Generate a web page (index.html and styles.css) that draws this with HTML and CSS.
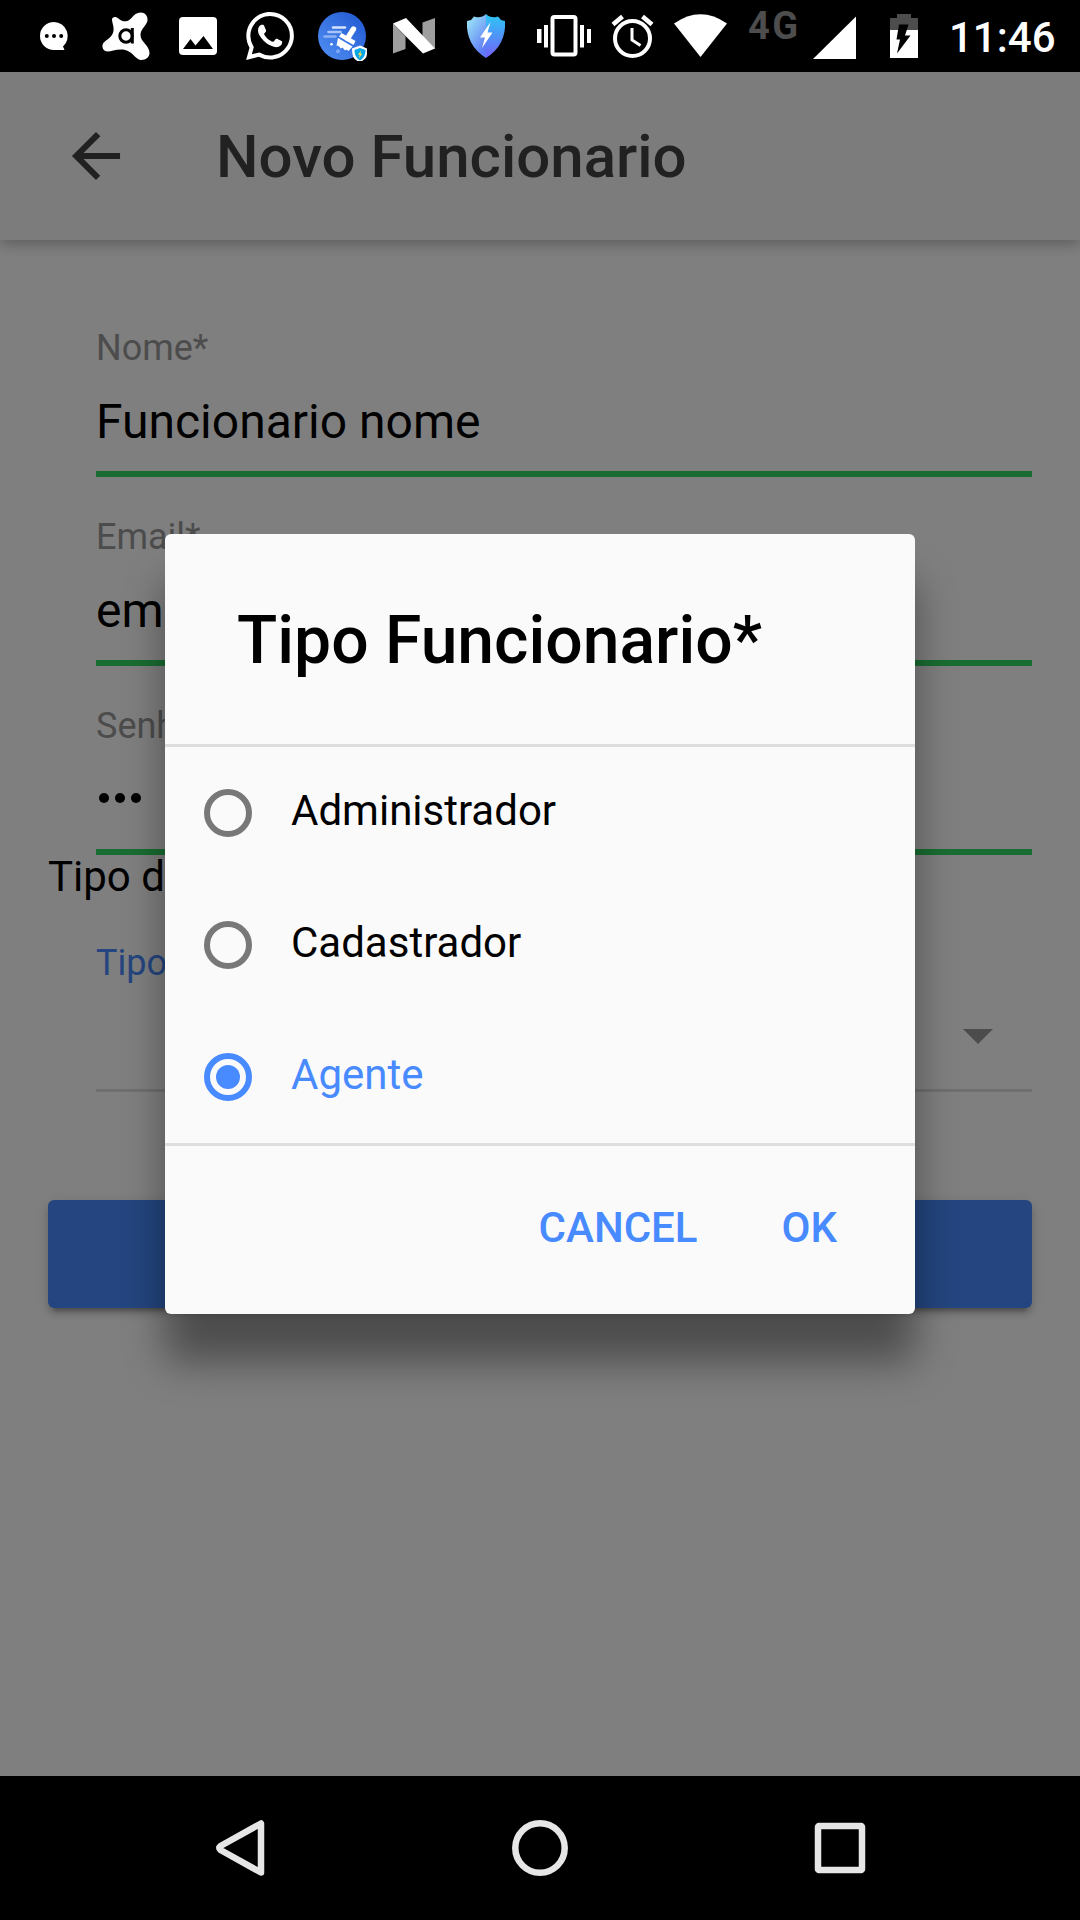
FILE: index.html
```html
<!DOCTYPE html>
<html lang="pt">
<head>
<meta charset="utf-8">
<title>Novo Funcionario</title>
<link rel="stylesheet" href="styles.css">
</head>
<body>
<header class="status">
  <div class="status-notifications">
    <svg class="notif" viewBox="18 0 72 72"><path fill="#fff" d="M54 22a14 14 0 1 0 0 28H64.500L63 46.500A14 14 0 0 0 54 22z"/><g><circle cx="46.800" cy="36" r="2"/><circle cx="54" cy="36" r="2"/><circle cx="61.200" cy="36" r="2"/></g></svg>
    <svg class="notif" viewBox="90 0 72 72"><path fill="#fff" d="M112 19.500C112 16.500 116 16 118.500 18.500C122 22 127 22.500 131 18.500C134 14.500 137 12.500 140.500 12.500C145 12.500 148 16 147.500 20.500C147 25 140.500 29 140.500 35C140.500 42 149.500 45.500 149.500 53C149.500 57 146 60 141.500 60C134.500 60 133 49.500 121 49.500C115 49.500 111 51.500 107.500 51.500C104 51.500 102 48.500 102.500 45C103.500 40 112 39.500 113.500 31C114.200 26 112 23 112 19.500z"/><circle cx="126" cy="36" r="6.200" fill="none" stroke="#000" stroke-width="3"/><path d="M132.300 28v15.500" stroke="#000" stroke-width="3"/></svg>
    <svg class="notif" viewBox="162 0 72 72"><rect x="179" y="17" width="38" height="38" rx="4" fill="#fff"/><path d="M183 49l7.500-10 5 6.500 8-9.500L213 49z"/></svg>
    <svg class="notif" viewBox="234 0 72 72"><g transform="translate(246 12) scale(2)" fill="#fff"><path d="M17.472 14.382c-.297-.149-1.758-.867-2.030-.967-.273-.099-.471-.148-.670.150-.197.297-.767.966-.940 1.164-.173.199-.347.223-.644.075-.297-.150-1.255-.463-2.390-1.475-.883-.788-1.480-1.761-1.653-2.059-.173-.297-.018-.458.130-.606.134-.133.298-.347.446-.520.149-.174.198-.298.298-.497.099-.198.050-.371-.025-.520-.075-.149-.669-1.612-.916-2.207-.242-.579-.487-.500-.669-.510-.173-.008-.371-.010-.570-.010-.198 0-.520.074-.792.372-.272.297-1.040 1.016-1.040 2.479 0 1.462 1.065 2.875 1.213 3.074.149.198 2.096 3.200 5.077 4.487.709.306 1.262.489 1.694.625.712.227 1.360.195 1.871.118.571-.085 1.758-.719 2.006-1.413.248-.694.248-1.289.173-1.413-.074-.124-.272-.198-.570-.347m-5.421 7.403h-.004a9.870 9.870 0 01-5.031-1.378l-.361-.214-3.741.982.998-3.648-.235-.374a9.860 9.860 0 01-1.510-5.260c.001-5.450 4.436-9.884 9.888-9.884 2.640 0 5.122 1.030 6.988 2.898a9.825 9.825 0 012.893 6.994c-.003 5.450-4.437 9.884-9.885 9.884m8.413-18.297A11.815 11.815 0 0012.050 0C5.495 0 .160 5.335.157 11.892c0 2.096.547 4.142 1.588 5.945L.057 24l6.305-1.654a11.882 11.882 0 005.683 1.448h.005c6.554 0 11.890-5.335 11.893-11.893a11.821 11.821 0 00-3.480-8.413z"/></g></svg>
    <svg class="notif" viewBox="306 0 72 72">
      <defs><linearGradient id="disc" x1="0" y1="1" x2="1" y2="0"><stop offset="0" stop-color="#5290f4"/><stop offset="1" stop-color="#1f57d0"/></linearGradient></defs>
      <circle cx="342" cy="36" r="24" fill="url(#disc)"/>
      <g stroke-width="2.600" stroke-linecap="round"><path d="M333 27.500h12" stroke="#d5e2fb"/><path d="M328.500 32h12" stroke="#a9c5f8"/><path d="M324.500 36.500h11" stroke="#8fb2f4"/></g>
      <path d="M353.500 29L347.500 38.500" stroke="#fff" stroke-width="5.400" stroke-linecap="round"/>
      <path fill="#fff" d="M341.500 33l14 8-2 4-14.500-8.500zM338 38l14.500 8.500-4 4.500-2-1.500-1.500 1-2.500-3-1.500 1-2.500-2.500-2-.5z"/>
      <circle cx="331.500" cy="44.200" r="1.300" fill="#fff"/><circle cx="338" cy="51.300" r="2" fill="#7daaf9"/>
      <path d="M360 45.500l7 3c0 6-1.500 10-5 12.500h-4.500c-3.500-2.500-5.500-6.500-5.500-12.500z" fill="#fff"/><circle cx="359.800" cy="53.800" r="7.200" fill="#fff"/>
      <path d="M360 48l5.500 2c0 4.500-1.500 8-5.500 10.500c-4-2.500-5.500-6-5.500-10.500z" fill="#08a7e5"/><path fill="#fd4" d="M361 50.500l-3 4.200h1.700l-.700 3.500 3.200-4.500h-1.700z"/>
    </svg>
    <svg class="notif" viewBox="378 0 72 72"><path fill="#9e9e9e" d="M393 23.500l12.500 13V49L393 53.500zM422.500 22.500L435 18v31l-12.500-12z"/><path fill="#fff" d="M393 23.500L406 18l29 30.500-12 5z"/></svg>
    <svg class="notif" viewBox="450 0 72 72">
      <defs><linearGradient id="sl" x1="0" y1="0" x2=".6" y2="1"><stop offset="0" stop-color="#a0f0f8"/><stop offset="1" stop-color="#607af5"/></linearGradient><linearGradient id="sr" x1="0" y1="0" x2="0" y2="1"><stop offset="0" stop-color="#2bc8f5"/><stop offset="1" stop-color="#7461fa"/></linearGradient></defs>
      <path fill="url(#sl)" d="M486 14q-3.500 3.500-9 3.200l-3-.7-3 3.500-4 1q-1.500 24 19 37z"/><path fill="url(#sr)" d="M486 14q3.500 3.500 9 3.200l3-.7 3 3.500 4 1q1.500 24-19 37z"/>
      <path fill="#fff" d="M490.500 22L480 37.500h5L482 48l10.500-15.500h-5z"/>
    </svg>
  </div>
  <div class="status-system">
    <svg class="sys" viewBox="530 0 68 72"><rect x="552.500" y="17" width="23" height="37.500" rx="2" fill="none" stroke="#fff" stroke-width="4"/><path fill="#fff" d="M537 29h4.500v14H537zM544 25h4v22.500h-4zM580 25h4v22.500h-4zM587 29h4v14h-4z"/></svg>
    <svg class="sys" viewBox="598 0 68 72"><g fill="none" stroke="#fff"><circle cx="632.500" cy="38.500" r="17.500" stroke-width="4"/><path stroke-width="3" d="M632 28v12l8.500 5.500"/><path stroke-width="4.600" d="M613 24.500l9.500-8M652 24.500l-9.500-8"/></g></svg>
    <svg class="sys" viewBox="666 0 68 72"><path fill="#fff" d="M674 23.500Q700.500 5 727 23.500L700.500 57z"/></svg>
    <span class="network">4G</span>
    <svg class="sys" viewBox="800 0 68 72"><path fill="#fff" d="M813 59l43-42.500V59z"/></svg>
    <svg class="sys" viewBox="868 0 68 72"><path fill="#4d4d4d" d="M890 30V18h7v-4h14v4h7v12z"/><path fill="#fff" d="M890 30h28v28h-28z"/><path d="M899 24.500h9.500L905 35.500h5.500L897 53.500l3-14h-3.500z"/></svg>
  </div>
  <span class="clock">11:46</span>
</header>

<main class="app">
  <div class="toolbar">
    <svg class="back" viewBox="0 0 512 512"><path d="M427 234.625H167.296l119.702-119.702L256 85 85 256l171 171 29.922-29.924-118.626-119.701H427v-42.750z"/></svg>
    <h1 class="toolbar-title">Novo Funcionario</h1>
  </div>
  <form class="form">
    <div class="field"><span class="field-label">Nome*</span><span class="field-value">Funcionario nome</span></div>
    <div class="field"><span class="field-label">Email*</span><span class="field-value">email</span></div>
    <div class="field"><span class="field-label">Senha*</span><span class="field-value dots"><i class="dot"></i><i class="dot"></i><i class="dot"></i></span></div>
    <div class="section">Tipo de</div>
    <div class="select"><span class="field-label active">Tipo*</span><div class="select-row"><i class="caret"></i></div></div>
    <div class="submit"></div>
  </form>

  <div class="backdrop">
    <section class="alert">
      <h2 class="alert-title">Tipo Funcionario*</h2>
      <div class="options">
        <div class="option"><i class="radio"></i><span>Administrador</span></div>
        <div class="option"><i class="radio"></i><span>Cadastrador</span></div>
        <div class="option checked"><i class="radio"></i><span>Agente</span></div>
      </div>
      <div class="actions"><span>CANCEL</span><span>OK</span></div>
    </section>
  </div>
</main>

<nav class="nav">
  <svg class="nav-icon" viewBox="190 0 100 144"><path d="M261 47.500v49L220.500 74q-2.500-2 0-4z"/></svg>
  <svg class="nav-icon" viewBox="490 0 100 144"><circle cx="540" cy="72" r="24.700"/></svg>
  <svg class="nav-icon" viewBox="790 0 100 144"><rect x="818" y="50" width="44" height="44" rx="1"/></svg>
</nav>
</body>
</html>
```
FILE: styles.css
```css
* { box-sizing: border-box; }

body {
  margin: 0;
  width: 1080px;
  height: 1920px;
  display: flex;
  flex-direction: column;
  overflow: hidden;
  background: #000;
  font-family: Roboto, sans-serif;
}

/* Status bar */
.status { height: 72px; display: flex; background: #000; }
.status-notifications { display: flex; padding-left: 18px; }
.notif { width: 72px; height: 72px; }
.status-system { display: flex; margin-left: 8px; }
.sys { width: 68px; height: 72px; }
.network {
  width: 66px;
  padding-left: 14px;
  font-size: 38px;
  font-weight: 700;
  line-height: 52px;
  letter-spacing: 2.5px;
  color: #4d4d4d;
}
.clock {
  margin-left: 13px;
  font-size: 42px;
  font-weight: 500;
  line-height: 76px;
  color: #fff;
}

/* Page under the dialog */
.app { position: relative; height: 1704px; background: #fff; }
.toolbar {
  height: 168px;
  display: flex;
  align-items: center;
  padding-left: 60px;
  background: #f8f8f8;
  box-shadow: 0 4px 14px rgba(0, 0, 0, .28);
}
.back { width: 72px; height: 72px; fill: #424242; }
.toolbar-title {
  margin: 2px 0 0 84px;
  font-size: 60px;
  font-weight: 500;
  line-height: 72px;
  color: #424242;
}
.form { padding: 48px 48px 0; }
.field {
  height: 189px;
  margin-left: 48px;
  padding-top: 39px;
  border-bottom: 6px solid #32db64;
}
.field-label { display: block; font-size: 36px; line-height: 42px; color: #999; }
.field-label.active { color: #488aff; }
.field-value { display: block; margin-top: 25px; font-size: 48px; line-height: 56px; color: #000; }
.field-value.dots { display: flex; align-items: center; gap: 6px; height: 52px; padding-left: 3px; }
.dot { width: 10px; height: 10px; border-radius: 50%; background: #000; }
.section { font-size: 42px; line-height: 43px; }
.select { margin-left: 48px; padding-top: 44px; border-bottom: 3px solid #dedede; }
.select-row { display: flex; justify-content: flex-end; padding: 45px 39px 45px 0; }
.caret { border: 15px solid transparent; border-top-color: #999; border-bottom: 0; }
.submit {
  height: 108px;
  margin-top: 108px;
  border-radius: 6px;
  background: #488aff;
  box-shadow: 0 6px 6px rgba(0, 0, 0, .14), 0 9px 3px -6px rgba(0, 0, 0, .2), 0 3px 15px rgba(0, 0, 0, .12);
}

/* Dialog */
.backdrop {
  position: absolute;
  inset: 0;
  display: flex;
  align-items: center;
  justify-content: center;
  background: rgba(0, 0, 0, .5);
}
.alert {
  width: 750px;
  height: 780px;
  border-radius: 6px;
  background: #fafafa;
  box-shadow: 0 48px 40px rgba(0, 0, 0, .4);
}
.alert-title {
  height: 210px;
  margin: 0;
  padding-left: 72px;
  font-size: 66px;
  font-weight: 500;
  line-height: 214px;
  color: #000;
}
.options { border-top: 3px solid #dedede; border-bottom: 3px solid #dedede; }
.option {
  height: 132px;
  display: flex;
  align-items: center;
  gap: 39px;
  padding-left: 39px;
  font-size: 42px;
  line-height: 48px;
  color: #000;
}
.option span { margin-bottom: 4px; }
.radio {
  width: 48px;
  height: 48px;
  padding: 6px;
  border: 6px solid #787878;
  border-radius: 50%;
}
.checked { color: #488aff; }
.checked .radio { border-color: #488aff; }
.checked .radio::before {
  content: "";
  display: block;
  width: 24px;
  height: 24px;
  border-radius: 50%;
  background: #488aff;
}
.actions {
  display: flex;
  justify-content: flex-end;
  gap: 84px;
  padding: 57px 78px 0 0;
  font-size: 42px;
  font-weight: 500;
  line-height: 49px;
  color: #488aff;
}

/* Navigation bar */
.nav {
  height: 144px;
  display: flex;
  gap: 200px;
  padding-left: 190px;
  background: #000;
}
.nav-icon {
  width: 100px;
  height: 144px;
  fill: none;
  stroke: #e6e6e6;
  stroke-width: 6.500;
  stroke-linejoin: round;
}
```
